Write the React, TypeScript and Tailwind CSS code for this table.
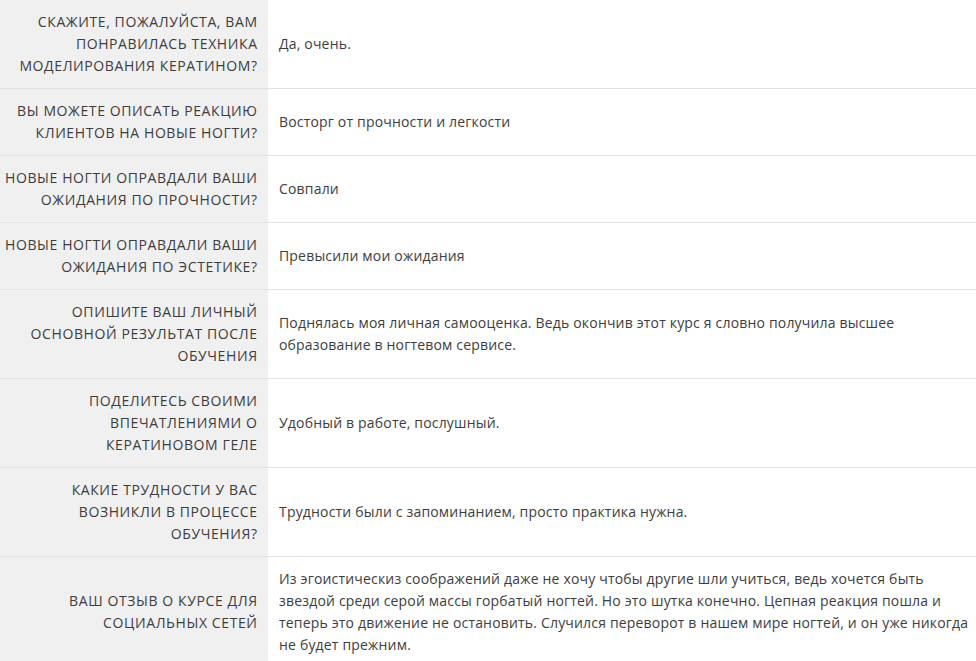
import React from "react";

const rows: { q: string[]; a: string[] }[] = [
  { q: ["СКАЖИТЕ, ПОЖАЛУЙСТА, ВАМ", "ПОНРАВИЛАСЬ ТЕХНИКА", "МОДЕЛИРОВАНИЯ КЕРАТИНОМ?"], a: ["Да, очень."] },
  { q: ["ВЫ МОЖЕТЕ ОПИСАТЬ РЕАКЦИЮ", "КЛИЕНТОВ НА НОВЫЕ НОГТИ?"], a: ["Восторг от прочности и легкости"] },
  { q: ["НОВЫЕ НОГТИ ОПРАВДАЛИ ВАШИ", "ОЖИДАНИЯ ПО ПРОЧНОСТИ?"], a: ["Совпали"] },
  { q: ["НОВЫЕ НОГТИ ОПРАВДАЛИ ВАШИ", "ОЖИДАНИЯ ПО ЭСТЕТИКЕ?"], a: ["Превысили мои ожидания"] },
  {
    q: ["ОПИШИТЕ ВАШ ЛИЧНЫЙ", "ОСНОВНОЙ РЕЗУЛЬТАТ ПОСЛЕ", "ОБУЧЕНИЯ"],
    a: ["Поднялась моя личная самооценка. Ведь окончив этот курс я словно получила высшее", "образование в ногтевом сервисе."],
  },
  { q: ["ПОДЕЛИТЕСЬ СВОИМИ", "ВПЕЧАТЛЕНИЯМИ О", "КЕРАТИНОВОМ ГЕЛЕ"], a: ["Удобный в работе, послушный."] },
  { q: ["КАКИЕ ТРУДНОСТИ У ВАС", "ВОЗНИКЛИ В ПРОЦЕССЕ", "ОБУЧЕНИЯ?"], a: ["Трудности были с запоминанием, просто практика нужна."] },
  {
    q: ["ВАШ ОТЗЫВ О КУРСЕ ДЛЯ", "СОЦИАЛЬНЫХ СЕТЕЙ"],
    a: [
      "Из эгоистическиз соображений даже не хочу чтобы другие шли учиться, ведь хочется быть",
      "звездой среди серой массы горбатый ногтей. Но это шутка конечно. Цепная реакция пошла и",
      "теперь это движение не остановить. Случился переворот в нашем мире ногтей, и он уже никогда",
      "не будет прежним.",
    ],
  },
];

export default function App() {
  return (
    <div
      className="w-[976px] h-[661px] overflow-hidden bg-white text-[#3d3d3d] text-[14px] leading-[22px]"
      style={{ fontFamily: '"Open Sans", "Liberation Sans", sans-serif' }}
    >
      {rows.map((r, i) => (
        <div key={i} className="flex border-b border-[#e2e2e2]">
          <div className="w-[268px] shrink-0 bg-[#f0f0f0] py-[11px] pr-[11px] pl-1 flex flex-col justify-center items-end text-right tracking-[0.6px]">
            {r.q.map((l, j) => (
              <div key={j} className="whitespace-nowrap mr-[-0.6px]">{l}</div>
            ))}
          </div>
          <div className="flex-1 py-[11px] pl-[11px] pr-1 flex flex-col justify-center tracking-[0.18px]">
            {r.a.map((l, j) => (
              <div key={j} className="whitespace-nowrap">{l}</div>
            ))}
          </div>
        </div>
      ))}
    </div>
  );
}
